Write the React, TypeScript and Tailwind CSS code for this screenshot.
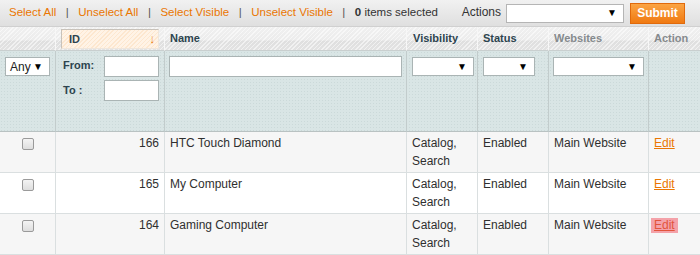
import React from "react";

const font = "font-['Liberation_Sans',Arial,Helvetica,sans-serif]";

function FakeSelect({ w, text }: { w: string; text?: string }) {
  return (
    <div
      className={`${w} h-[19px] bg-white border border-[#aab4b4] flex items-center justify-between pl-[4px] pr-[6px] text-[12px] text-[#222]`}
    >
      <span>{text ?? ""}</span>
      <span className="text-[10px] leading-none text-black">▼</span>
    </div>
  );
}

function Checkbox() {
  return (
    <div className="w-[12px] h-[12px] rounded-[2px] border border-[#9a9a9a] bg-[linear-gradient(#f4f4f4,#dedede)]" />
  );
}

const rows = [
  { id: 166, name: "HTC Touch Diamond", bg: "bg-[#f6f6f6]", hl: false },
  { id: 165, name: "My Computer", bg: "bg-white", hl: false },
  { id: 164, name: "Gaming Computer", bg: "bg-[#f6f6f6]", hl: true },
];

export default function App() {
  const th = "p-0 h-[24px] border-b border-r border-b-[#c9cfcf] border-r-[#f7f7f7] text-left align-middle text-[11px] font-bold";
  const fd = "p-0 h-[81px] align-top border-b border-r border-b-[#b9c2c2] border-r-[#c2cccc]";
  const td = "p-0 h-[41px] align-top border-b border-r border-[#dadfe0] text-[12px] leading-[18px] text-[#2f2f2f]";
  return (
    <div className={`${font} w-[700px] h-[255px] overflow-hidden bg-white`}>
      {/* mass action bar */}
      <div className="h-[27px] border-b border-[#d0d0d0] bg-[linear-gradient(#f1f1f1,#dfdfdf)] flex items-center justify-between pl-[9px] pr-[15px] text-[11.5px]">
        <div className="flex items-center">
          <span className="text-[#ea7601]">Select All</span>
          <span className="mx-[9.5px] text-[#555]">|</span>
          <span className="text-[#ea7601]">Unselect All</span>
          <span className="mx-[9.5px] text-[#555]">|</span>
          <span className="text-[#ea7601]">Select Visible</span>
          <span className="mx-[9.5px] text-[#555]">|</span>
          <span className="text-[#ea7601]">Unselect Visible</span>
          <span className="mx-[9.5px] text-[#555]">|</span>
          <span className="text-[#333]">
            <b>0</b> items selected
          </span>
        </div>
        <div className="flex items-center">
          <span className="text-[12px] text-[#333] mr-[5px] -mt-[2px]">Actions</span>
          <div className="w-[118px] h-[19px] bg-white border border-[#b5b5b5] flex items-center justify-end pr-[6px]">
            <span className="text-[10px] leading-none text-black">▼</span>
          </div>
          <div className="ml-[6px] w-[55px] h-[21px] border border-[#e06a0c] bg-[linear-gradient(#fba443,#f07a12)] text-white font-bold text-[12px] flex items-center justify-center">
            Submit
          </div>
        </div>
      </div>

      <table className="table-fixed border-separate border-spacing-0 w-[700px]">
        <colgroup>
          <col className="w-[56px]" />
          <col className="w-[109px]" />
          <col className="w-[242px]" />
          <col className="w-[71px]" />
          <col className="w-[71px]" />
          <col className="w-[100px]" />
          <col className="w-[51px]" />
        </colgroup>
        <thead>
          <tr className="bg-[repeating-linear-gradient(135deg,rgba(255,255,255,0.55)_0px,rgba(255,255,255,0.55)_1px,transparent_1px,transparent_3px),linear-gradient(#f0f0f0_0%,#ececec_55%,#dfdfdf_58%,#e3e3e3_100%)]">
            <th className={th}></th>
            <th className={th}>
              <div className="mx-[5px] mt-[1px] h-[20px] border border-[#c8c2ba] border-b-[#efe6dc] border-r-[#efe6dc] bg-[repeating-linear-gradient(135deg,#fde7cf_0px,#fde7cf_1px,#fff3e6_1px,#fff3e6_3px)] flex items-center justify-between pl-[7px] pr-[3px] text-[#2d444f]">
                <span>ID</span>
                <span className="text-[#ea7601] text-[13px] font-normal scale-x-75">↓</span>
              </div>
            </th>
            <th className={`${th} pl-[5px] text-[#2d444f]`}>Name</th>
            <th className={`${th} pl-[6px] text-[#2d444f]`}>Visibility</th>
            <th className={`${th} pl-[5px] text-[#2d444f]`}>Status</th>
            <th className={`${th} pl-[5px] text-[#858a8d]`}>Websites</th>
            <th className={`${th} pl-[5px] text-[#858a8d] border-r-0`}>Action</th>
          </tr>
          <tr className="bg-[#d9e5e5] bg-[radial-gradient(#cbd9d9_0.7px,transparent_0.8px)] bg-[length:3px_3px]">
            <td className={`${fd} pt-[6px] pl-[5px]`}>
              <FakeSelect w="w-[45px]" text="Any" />
            </td>
            <td className={`${fd} pt-[5px] pl-[7px] pr-[5px]`}>
              <div className="flex flex-col gap-[3px] text-[11px] font-bold text-[#2d444f]">
                <div className="flex items-center justify-between">
                  <span className="-mt-[3px]">From:</span>
                  <div className="w-[55px] h-[21px] bg-white border border-[#aab4b4]" />
                </div>
                <div className="flex items-center justify-between">
                  <span>To :</span>
                  <div className="w-[55px] h-[21px] bg-white border border-[#aab4b4]" />
                </div>
              </div>
            </td>
            <td className={`${fd} pt-[5px] px-[4px]`}>
              <div className="w-full h-[21px] bg-white border border-[#aab4b4]" />
            </td>
            <td className={`${fd} pt-[6px] pl-[5px]`}>
              <FakeSelect w="w-[62px]" />
            </td>
            <td className={`${fd} pt-[6px] pl-[5px]`}>
              <FakeSelect w="w-[52px]" />
            </td>
            <td className={`${fd} pt-[6px] pl-[4px]`}>
              <FakeSelect w="w-[91px]" />
            </td>
            <td className={`${fd} border-r-0`}></td>
          </tr>
        </thead>
        <tbody>
          {rows.map((r) => (
            <tr key={r.id} className={r.bg}>
              <td className={`${td} pt-[6px]`}>
                <div className="flex justify-center">
                  <Checkbox />
                </div>
              </td>
              <td className={`${td} pt-[2px] pr-[5px] text-right`}>{r.id}</td>
              <td className={`${td} pt-[2px] pl-[5px]`}>{r.name}</td>
              <td className={`${td} pt-[2px] pl-[5px]`}>
                Catalog,
                <br />
                Search
              </td>
              <td className={`${td} pt-[2px] pl-[5px]`}>Enabled</td>
              <td className={`${td} pt-[2px] pl-[5px]`}>Main Website</td>
              <td className={`${td} pt-[2px] pl-[2px] border-r-0`}>
                <span
                  className={`inline-block px-[3px] leading-[15px] underline ${
                    r.hl ? "bg-[#f4a2a9] text-[#e2543c]" : "text-[#ea7601]"
                  }`}
                >
                  Edit
                </span>
              </td>
            </tr>
          ))}
        </tbody>
      </table>
    </div>
  );
}
